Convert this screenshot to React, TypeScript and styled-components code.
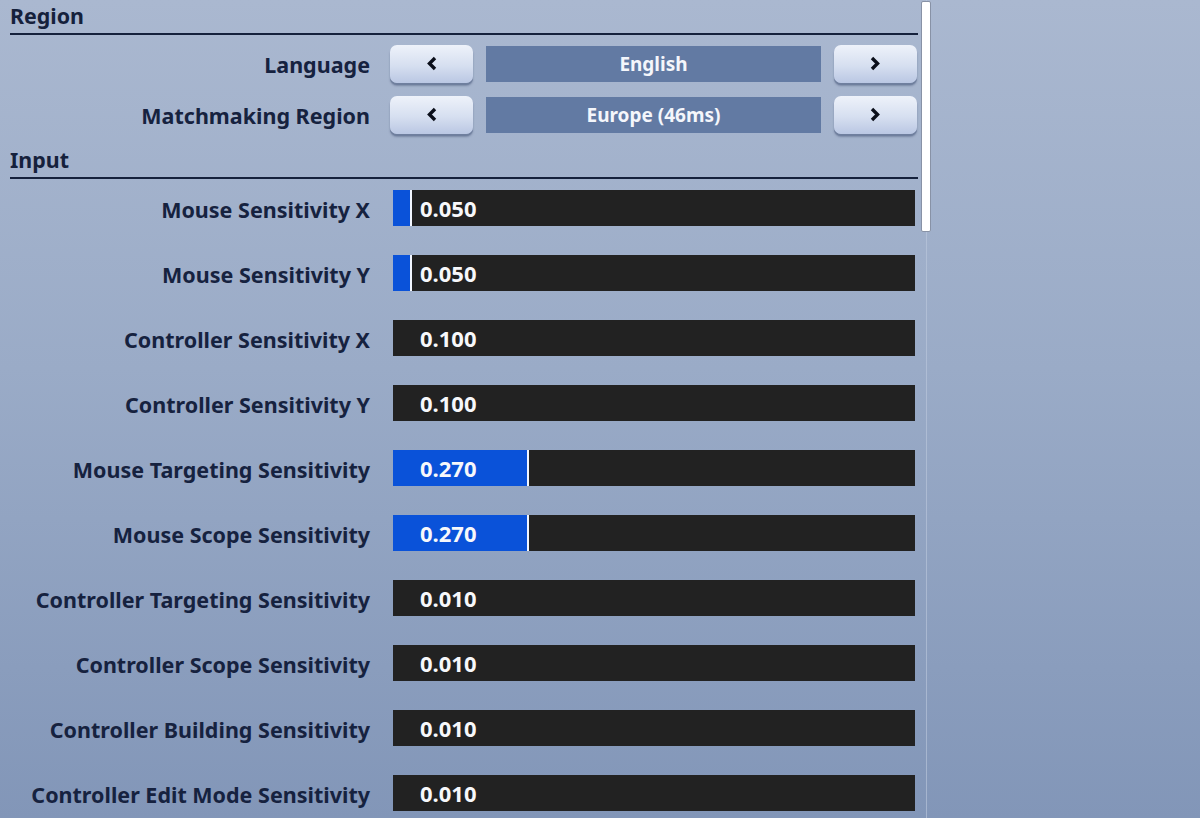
import React from 'react';
import styled, { createGlobalStyle } from 'styled-components';

const GlobalStyle = createGlobalStyle`
  html, body {
    margin: 0;
    padding: 0;
  }
  body {
    font-family: 'Noto Sans', 'Open Sans', sans-serif;
    font-weight: 700;
    background: #8a9dbd;
  }
`;

const Page = styled.div`
  display: flex;
  width: 1200px;
  height: 818px;
  overflow: hidden;
  background: linear-gradient(180deg, #aab8d0 0%, #9aabc7 45%, #8296b8 100%);
`;

const Panel = styled.div`
  width: 908px;
  padding-left: 10px;
  display: flex;
  flex-direction: column;
`;

const ScrollTrack = styled.div`
  position: relative;
  width: 10px;
  margin-left: 3px;
  &::before {
    content: '';
    position: absolute;
    left: 5px;
    top: 0;
    bottom: 0;
    width: 1px;
    background: rgba(190, 202, 222, 0.6);
  }
`;

const ScrollThumb = styled.div`
  position: relative;
  margin-top: 1px;
  width: 8px;
  height: 229px;
  background: #ffffff;
  border: 1px solid #8892a6;
  border-radius: 2px;
`;

const SectionHeader = styled.div<{ $top: number }>`
  margin-top: ${(p) => p.$top}px;
  height: 32px;
  line-height: 30px;
  font-size: 21.4px;
  color: #15213c;
  border-bottom: 2px solid #15213c;
`;

const Row = styled.div<{ $top: number; $height: number }>`
  display: grid;
  grid-template-columns: 360px 527px;
  column-gap: 20px;
  align-items: center;
  margin-top: ${(p) => p.$top}px;
  height: ${(p) => p.$height}px;
`;

const Label = styled.div`
  text-align: right;
  font-size: 21.5px;
  color: #16223f;
  white-space: nowrap;
  padding-top: 2px;
`;

const Selector = styled.div`
  display: grid;
  grid-template-columns: 83px 1fr 83px;
  column-gap: 13px;
  align-items: center;
`;

const ArrowButton = styled.div`
  height: 38px;
  border-radius: 7px;
  background: linear-gradient(180deg, #eef2fa 0%, #d6dff0 55%, #bac7e3 100%);
  box-shadow: 0 2px 0 #6f7f9e, 0 3px 2px rgba(40, 55, 90, 0.35);
  display: flex;
  align-items: center;
  justify-content: center;
`;

const ValueBox = styled.div`
  height: 36px;
  background: #627aa3;
  color: #f4f6fb;
  font-size: 19px;
  display: flex;
  align-items: center;
  justify-content: center;
`;

const Bar = styled.div`
  position: relative;
  height: 36px;
  margin: 0 2px 0 3px;
  background: #222222;
  display: flex;
  align-items: center;
  padding-left: 27px;
`;

const Fill = styled.div`
  position: absolute;
  left: 0;
  top: 0;
  bottom: 0;
  background: #0a52d9;
  border-right: 2px solid #f2f6ff;
`;

const BarValue = styled.span`
  position: relative;
  color: #f7f8fb;
  font-size: 22px;
`;

const Chevron = ({ dir }: { dir: 'left' | 'right' }) => (
  <svg width="11" height="15" viewBox="0 0 11 15">
    <polyline
      points={dir === 'left' ? '9,2 3.5,7.5 9,13' : '2,2 7.5,7.5 2,13'}
      fill="none"
      stroke="#0b0f1a"
      strokeWidth="3.4"
      strokeLinejoin="miter"
    />
  </svg>
);

const sliders: { label: string; value: string; fill?: number }[] = [
  { label: 'Mouse Sensitivity X', value: '0.050', fill: 17 },
  { label: 'Mouse Sensitivity Y', value: '0.050', fill: 17 },
  { label: 'Controller Sensitivity X', value: '0.100' },
  { label: 'Controller Sensitivity Y', value: '0.100' },
  { label: 'Mouse Targeting Sensitivity', value: '0.270', fill: 134 },
  { label: 'Mouse Scope Sensitivity', value: '0.270', fill: 134 },
  { label: 'Controller Targeting Sensitivity', value: '0.010' },
  { label: 'Controller Scope Sensitivity', value: '0.010' },
  { label: 'Controller Building Sensitivity', value: '0.010' },
  { label: 'Controller Edit Mode Sensitivity', value: '0.010' },
];

const selectors = [
  { label: 'Language', value: 'English' },
  { label: 'Matchmaking Region', value: 'Europe (46ms)' },
];

export default function App() {
  return (
    <>
      <GlobalStyle />
      <Page>
        <Panel>
          <SectionHeader $top={1}>Region</SectionHeader>
          {selectors.map((s, i) => (
            <Row key={s.label} $top={i === 0 ? 9 : 12} $height={39}>
              <Label>{s.label}</Label>
              <Selector>
                <ArrowButton>
                  <Chevron dir="left" />
                </ArrowButton>
                <ValueBox>{s.value}</ValueBox>
                <ArrowButton>
                  <Chevron dir="right" />
                </ArrowButton>
              </Selector>
            </Row>
          ))}
          <SectionHeader $top={11}>Input</SectionHeader>
          {sliders.map((s, i) => (
            <Row key={s.label} $top={i === 0 ? 11 : 29} $height={36}>
              <Label>{s.label}</Label>
              <Bar>
                {s.fill !== undefined && <Fill style={{ width: s.fill }} />}
                <BarValue>{s.value}</BarValue>
              </Bar>
            </Row>
          ))}
        </Panel>
        <ScrollTrack>
          <ScrollThumb />
        </ScrollTrack>
      </Page>
    </>
  );
}
